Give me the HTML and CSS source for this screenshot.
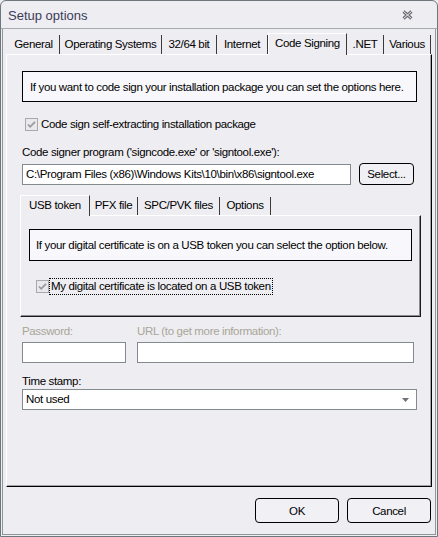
FILE: index.html
```html
<!DOCTYPE html>
<html>
<head>
<meta charset="utf-8">
<title>Setup options</title>
<link rel="stylesheet" href="styles.css">
</head>
<body>
<div class="window">
  <div class="titlebar">
    <span class="title">Setup options</span>
    <svg class="close" width="11" height="10" viewBox="0 0 11 10">
      <path d="M1.5 1.5 L9.5 8.5 M9.5 1.5 L1.5 8.5" stroke="#6a6a72" stroke-width="3" fill="none"/>
      <path d="M1.5 1.5 L9.5 8.5 M9.5 1.5 L1.5 8.5" stroke="#eeedf2" stroke-width="1" fill="none"/>
    </svg>
  </div>
  <div class="frame">
    <div class="tabs">
      <div class="tab t-general">General</div>
      <div class="tab t-os">Operating Systems</div>
      <div class="tab t-bit">32/64 bit</div>
      <div class="tab t-net">Internet</div>
      <div class="tab tab-active t-code">Code Signing</div>
      <div class="tab t-dotnet">.NET</div>
      <div class="tab t-various">Various</div>
    </div>
    <div class="panel">
      <div class="info">If you want to code sign your installation package you can set the options here.</div>
      <div class="check-row">
        <span class="checkbox"><svg width="13" height="13" viewBox="0 0 13 13"><path d="M3 6.5 L5.2 8.8 L10 3.8" stroke="#9a9a9e" stroke-width="1.8" fill="none"/></svg></span>
        <span class="check-label">Code sign self-extracting installation package</span>
      </div>
      <div class="label">Code signer program ('signcode.exe' or 'signtool.exe'):</div>
      <div class="path-row">
        <div class="input path-input">C:\Program Files (x86)\Windows Kits\10\bin\x86\signtool.exe</div>
        <div class="button select-btn">Select...</div>
      </div>
      <div class="subtabs">
        <div class="tab subtab-active s-usb">USB token</div>
        <div class="tab s-pfx">PFX file</div>
        <div class="tab s-spc">SPC/PVK files</div>
        <div class="tab s-opt">Options</div>
      </div>
      <div class="subpanel">
        <div class="info info-inner">If your digital certificate is on a USB token you can select the option below.</div>
        <div class="check-row check-row-inner">
          <span class="checkbox"><svg width="13" height="13" viewBox="0 0 13 13"><path d="M3 6.5 L5.2 8.8 L10 3.8" stroke="#9a9a9e" stroke-width="1.8" fill="none"/></svg></span>
          <span class="check-label focus">My digital certificate is located on a USB token</span>
        </div>
      </div>
      <div class="cred-grid">
        <div class="label disabled">Password:</div>
        <div class="label disabled">URL (to get more information):</div>
        <div class="input"></div>
        <div class="input"></div>
      </div>
      <div class="label ts-label">Time stamp:</div>
      <div class="input combo">
        <span>Not used</span>
        <svg class="arrow" width="7" height="4" viewBox="0 0 7 4"><path d="M0 0 H7 L3.5 4 Z" fill="#707078"/></svg>
      </div>
    </div>
    <div class="buttons">
      <div class="button dlg-btn">OK</div>
      <div class="button dlg-btn">Cancel</div>
    </div>
  </div>
</div>
</body>
</html>
```
FILE: styles.css
```css
* { box-sizing: border-box; }
html, body { margin: 0; padding: 0; background: #eeedf2; }
body {
  font-family: "Liberation Sans", Arial, sans-serif;
  font-size: 11.5px;
  letter-spacing: -0.35px;
  color: #000;
}
.window {
  width: 438px;
  height: 537px;
  border: 1px solid #6e777e;
  border-radius: 6px 6px 0 0;
  background: #eeedf2;
  display: flex;
  flex-direction: column;
}
.titlebar {
  height: 28px;
  flex: none;
  border-bottom: 1px solid #a6acb2;
  display: flex;
  align-items: center;
  justify-content: space-between;
  padding: 0 24px 0 7px;
}
.title {
  font-family: "Liberation Sans", Arial, sans-serif;
  font-size: 13px;
  letter-spacing: 0;
  color: #3c3b58;
  margin-top: 1px;
}
.close { display: block; margin-top: 1px; }
.frame {
  flex: 1;
  margin: 0 1px 1px;
  border: 1px solid #8e969c;
  border-top: none;
  display: flex;
  flex-direction: column;
  padding: 0 3px;
}
.tabs {
  display: flex;
  align-items: flex-end;
  height: 25px;
  padding-left: 2px;
}
.tab {
  height: 19px;
  line-height: 18px;
  text-align: center;
  white-space: nowrap;
  border-right: 1px solid #3a3a3a;
  flex: none;
}
.tab-active, .subtab-active {
  height: 22px;
  margin-bottom: -1px;
  border-top: 1px solid #fff;
  border-left: 1px solid #fff;
  background: #eeedf2;
  position: relative;
  z-index: 1;
  line-height: 19px;
}
.t-general { width: 52px; }
.t-os { width: 102px; }
.t-bit { width: 55px; }
.t-net { width: 51px; }
.t-code { width: 79px; }
.t-dotnet { width: 37px; }
.t-various { width: 47px; }

.panel {
  height: 433px;
  border-top: 1px solid #fff;
  border-left: 1px solid #fff;
  border-right: 1px solid #000;
  border-bottom: 1px solid #000;
  box-shadow: inset -1px -1px 0 #a3a3a8;
  padding: 16px 14px 0 15px;
  display: flex;
  flex-direction: column;
}
.info {
  height: 31px;
  border: 1px solid #000;
  background: #f8f8fc;
  display: flex;
  align-items: center;
  padding-left: 7px;
  white-space: nowrap;
}
.check-row {
  display: flex;
  align-items: center;
  height: 16px;
  margin-top: 14px;
  padding-left: 3px;
}
.checkbox {
  width: 13px;
  height: 13px;
  border: 1px solid #a9a9ad;
  background: #e9e9ec;
  display: block;
  flex: none;
  position: relative;
}
.checkbox svg { display: block; margin: -1px; }
.check-label { margin-left: 3px; white-space: nowrap; }
.label {
  height: 16px;
  line-height: 16px;
  white-space: nowrap;
  margin-top: 12px;
}
.path-row {
  display: flex;
  align-items: flex-start;
  margin-top: 3px;
}
.input {
  height: 21px;
  border: 1px solid #838b91;
  background: #fff;
  line-height: 19px;
  padding-left: 3px;
  white-space: nowrap;
  overflow: hidden;
}
.path-input {
  width: 329px;
  margin-top: 1px;
}
.button {
  border: 1px solid #000;
  border-radius: 4px;
  background: #f1f0f4;
  display: flex;
  align-items: center;
  justify-content: center;
}
.select-btn {
  width: 55px;
  height: 22px;
  margin-left: 8px;
}
.subtabs {
  display: flex;
  align-items: flex-end;
  height: 20px;
  margin-top: 10px;
  margin-left: -2px;
}
.subtabs .tab { height: 18px; line-height: 17px; }
.subtabs .subtab-active { height: 21px; line-height: 19px; }
.s-usb { width: 70px; }
.s-pfx { width: 48px; }
.s-spc { width: 82px; }
.s-opt { width: 51px; }
.subpanel {
  width: 401px;
  height: 102px;
  margin-left: -2px;
  flex: none;
  border-top: 1px solid #fff;
  border-left: 1px solid #fff;
  border-right: 1px solid #1a1a1a;
  border-bottom: 1px solid #1a1a1a;
  box-shadow: inset -1px -1px 0 #8a8a90;
  padding: 13px 0 0 8px;
}
.info-inner {
  width: 383px;
  height: 32px;
  padding-left: 6px;
}
.check-row-inner {
  margin-top: 17px;
  height: 17px;
  padding-left: 7px;
}
.focus {
  margin-left: 0;
  border: 1px dotted #000;
  height: 17px;
  line-height: 15px;
  padding: 0 1px;
}
.cred-grid {
  display: grid;
  grid-template-columns: 104px 277px;
  column-gap: 11px;
  row-gap: 3px;
  margin-top: 6px;
}
.cred-grid .label { margin-top: 0; }
.disabled { color: #a9a697; }
.ts-label { margin-top: 10px; }
.combo {
  display: flex;
  align-items: center;
  justify-content: space-between;
  padding-right: 7px;
}
.arrow { display: block; }
.buttons {
  display: flex;
  justify-content: flex-end;
  gap: 8px;
  margin-top: 11px;
  padding-right: 1px;
}
.dlg-btn {
  width: 84px;
  height: 25px;
}
```
